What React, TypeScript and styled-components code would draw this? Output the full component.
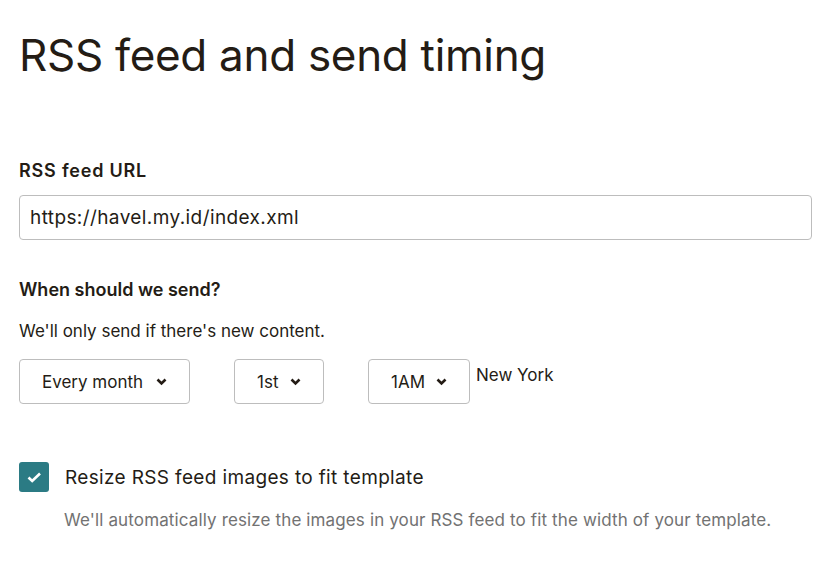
import React from "react";
import styled, { createGlobalStyle } from "styled-components";

const Global = createGlobalStyle`
  html, body { margin: 0; padding: 0; background: #fff; }
  body { font-family: Inter, Roboto, "Liberation Sans", sans-serif; color: #241c15; }
`;

const Page = styled.div`
  padding: 24px 0 0 19px;
  width: 793px;
`;

const Title = styled.h1`
  margin: 0;
  font-size: 44px;
  font-weight: 400;
  line-height: 62px;
  letter-spacing: -0.3px;
`;

const Section = styled.section<{ $top: number }>`
  margin-top: ${(p) => p.$top}px;
`;

const Label = styled.div<{ $spacing?: number }>`
  font-size: 18px;
  font-weight: 600;
  line-height: 26px;
  letter-spacing: ${(p) => p.$spacing ?? 0}px;
`;

const Help = styled.div`
  font-size: 17px;
  line-height: 24px;
  margin-top: 16px;
`;

const TextInput = styled.div`
  box-sizing: border-box;
  margin-top: 11px;
  height: 45px;
  border: 1px solid #bdbdbd;
  border-radius: 4px;
  padding: 0 10px;
  display: flex;
  align-items: center;
  font-size: 19px;
  letter-spacing: 0.4px;
`;

const SelectRow = styled.div`
  display: flex;
  align-items: flex-start;
  margin-top: 16px;
`;

const Select = styled.div<{ $w: number; $gap: number }>`
  box-sizing: border-box;
  width: ${(p) => p.$w}px;
  height: 45px;
  border: 1px solid #bdbdbd;
  border-radius: 4px;
  padding: 0 22px;
  display: flex;
  align-items: center;
  justify-content: space-between;
  font-size: 17px;
  margin-right: ${(p) => p.$gap}px;
`;

const Zone = styled.div`
  font-size: 17px;
  line-height: 32px;
`;

const CheckRow = styled.div`
  display: flex;
  align-items: center;
  gap: 16px;
`;

const Box = styled.div`
  width: 30px;
  height: 30px;
  border-radius: 3px;
  background: #2b7b84;
  display: flex;
  align-items: center;
  justify-content: center;
`;

const CheckLabel = styled.div`
  font-size: 19px;
  letter-spacing: 0.35px;
`;

const Note = styled.div`
  margin: 18px 0 0 45px;
  font-size: 17px;
  letter-spacing: 0.13px;
  color: #727272;
`;

const Chevron = () => (
  <svg width="11" height="8" viewBox="0 0 11 8">
    <path d="M1.5 1.5 L5.5 5.5 L9.5 1.5" fill="none" stroke="#241c15" strokeWidth="2.6" />
  </svg>
);

export default function App() {
  return (
    <>
      <Global />
      <Page>
        <Title>RSS feed and send timing</Title>
        <Section $top={72}>
          <Label $spacing={0.8}>RSS feed URL</Label>
          <TextInput>https://havel.my.id/index.xml</TextInput>
        </Section>
        <Section $top={37}>
          <Label>When should we send?</Label>
          <Help>We'll only send if there's new content.</Help>
          <SelectRow>
            <Select $w={171} $gap={44}>Every month <Chevron /></Select>
            <Select $w={90} $gap={44}>1st <Chevron /></Select>
            <Select $w={102} $gap={6}>1AM <Chevron /></Select>
            <Zone>New York</Zone>
          </SelectRow>
        </Section>
        <Section $top={58}>
          <CheckRow>
            <Box>
              <svg width="15" height="11" viewBox="0 0 15 11">
                <path d="M1.5 5.5 L5.2 9 L13 1.5" fill="none" stroke="#fff" strokeWidth="2.6" />
              </svg>
            </Box>
            <CheckLabel>Resize RSS feed images to fit template</CheckLabel>
          </CheckRow>
          <Note>We'll automatically resize the images in your RSS feed to fit the width of your template.</Note>
        </Section>
      </Page>
    </>
  );
}
